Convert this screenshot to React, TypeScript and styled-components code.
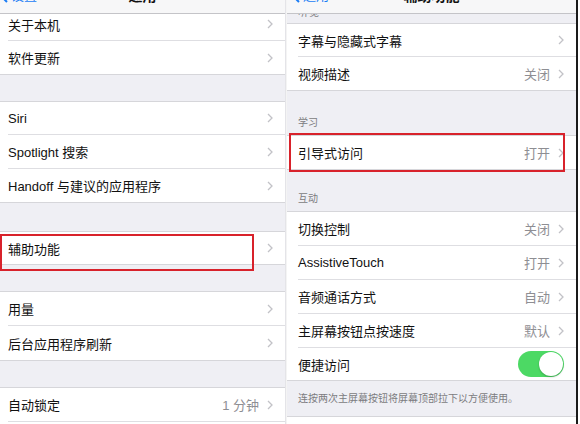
import React from "react";
import styled, { createGlobalStyle } from "styled-components";

const Global = createGlobalStyle`
  html, body { margin: 0; padding: 0; background: #ffffff; }
  body { font-family: "Liberation Sans", "Noto Sans CJK SC", sans-serif; -webkit-font-smoothing: antialiased; }
  #root { width: 580px; height: 424px; overflow: hidden; }
`;

const Page = styled.div`
  display: flex;
  width: 580px;
  height: 424px;
  background: #ffffff;
`;

const Panel = styled.div<{ $w: number; $edge?: boolean }>`
  width: ${(p) => p.$w}px;
  height: 424px;
  flex: none;
  display: flex;
  flex-direction: column;
  background: #efeff4;
  overflow: hidden;
  border-right: ${(p) => (p.$edge ? "2px solid #1a1a1a" : "1px solid #e4e4e8")};
  box-sizing: content-box;
`;

const Spacer = styled.div`
  width: 1px;
  flex: none;
  background: #f4f4f4;
`;

const NavBar = styled.div`
  position: relative;
  height: 14px;
  flex: none;
  background: #f7f7f8;
  border-bottom: 1px solid #c4c4c8;
  box-sizing: border-box;
  overflow: hidden;
  display: flex;
  align-items: flex-end;
  justify-content: center;
`;

const NavTitle = styled.div`
  font-size: 14px;
  font-weight: 700;
  color: #111;
  line-height: 18px;
  margin-bottom: 8px;
`;

const Back = styled.div<{ $left: number }>`
  position: absolute;
  left: ${(p) => p.$left}px;
  bottom: 8px;
  display: flex;
  align-items: center;
  gap: 3px;
  color: #1a7cf5;
  font-size: 13px;
  line-height: 18px;
`;

const Gap = styled.div<{ $h: number }>`
  height: ${(p) => p.$h}px;
  flex: none;
  box-sizing: border-box;
  border-bottom: 1px solid #d6d6da;
  display: flex;
  align-items: flex-end;
  padding: 0 11px 6px;
  font-size: 10px;
  color: #7c7c80;
  overflow: hidden;
`;

const CutHeader = styled(Gap)`
  padding-bottom: 0;
  align-items: flex-start;
  & > span {
    margin-top: -10px;
    letter-spacing: 1px;
  }
`;

const Footer = styled.div`
  height: 36px;
  flex: none;
  padding: 9px 11px 0;
  box-sizing: border-box;
  font-size: 10px;
  color: #7c7c80;
  border-bottom: 1px solid #d6d6da;
`;

const Group = styled.div<{ $inset: number }>`
  background: #ffffff;
  border-bottom: 1px solid #d6d6da;
  padding-left: ${(p) => p.$inset}px;
  flex: none;
`;

const Row = styled.div<{ $h?: number; $shift?: number }>`
  position: relative;
  height: ${(p) => p.$h ?? 33}px;
  box-sizing: border-box;
  display: flex;
  align-items: center;
  padding-right: 12px;
  padding-bottom: ${(p) => p.$shift ?? 0}px;
  border-bottom: 1px solid #dedee2;
  &:last-child { border-bottom: none; }
`;

const Label = styled.span`
  flex: 1;
  font-size: 13px;
  color: #111;
  white-space: nowrap;
`;

const Value = styled.span`
  font-size: 13px;
  color: #8e8e93;
  margin-right: 8px;
`;

const Mark = styled.div<{ $l: number; $t: number; $w: number; $h: number }>`
  position: absolute;
  left: ${(p) => p.$l}px;
  top: ${(p) => p.$t}px;
  width: ${(p) => p.$w}px;
  height: ${(p) => p.$h}px;
  border: 2px solid #d8222b;
  box-sizing: border-box;
  pointer-events: none;
`;

const Toggle = styled.div`
  width: 46px;
  height: 26px;
  border-radius: 13px;
  background: #4cd964;
  position: relative;
  flex: none;
  &::after {
    content: "";
    position: absolute;
    right: 1px;
    top: 1px;
    width: 24px;
    height: 24px;
    border-radius: 50%;
    background: #fff;
    box-shadow: 0 1px 2px rgba(0,0,0,0.25);
  }
`;

const Chevron = () => (
  <svg width="6" height="10" viewBox="0 0 6 10">
    <path d="M1 1 L5 5 L1 9" fill="none" stroke="#c2c2c7" strokeWidth="1.3" />
  </svg>
);

const BackChevron = () => (
  <svg width="8" height="14" viewBox="0 0 8 14">
    <path d="M7 1 L1 7 L7 13" fill="none" stroke="#1a7cf5" strokeWidth="2" />
  </svg>
);

type Item = { label: string; value?: string; toggle?: boolean };

const Cell = ({ item, h, shift, children }: { item: Item; h?: number; shift?: number; children?: React.ReactNode }) => (
  <Row $h={h} $shift={shift}>
    <Label>{item.label}</Label>
    {item.toggle ? (
      <Toggle />
    ) : (
      <>
        {item.value && <Value>{item.value}</Value>}
        {item.label && <Chevron />}
      </>
    )}
    {children}
  </Row>
);

export default function App() {
  return (
    <>
      <Global />
      <Page>
        <Panel $w={285}>
          <NavBar>
            <Back $left={0}>
              <BackChevron />
              设置
            </Back>
            <NavTitle>通用</NavTitle>
          </NavBar>
          <Group $inset={8}>
            <Cell item={{ label: "关于本机" }} h={27} shift={6} />
            <Cell item={{ label: "软件更新" }} h={33} />
          </Group>
          <Gap $h={27} />
          <Group $inset={8}>
            <Cell item={{ label: "Siri" }} h={33} />
            <Cell item={{ label: "Spotlight 搜索" }} h={34} />
            <Cell item={{ label: "Handoff 与建议的应用程序" }} h={33} />
          </Group>
          <Gap $h={29} />
          <Group $inset={8}>
            <Cell item={{ label: "辅助功能" }} h={32}>
              <Mark $l={-8} $t={2} $w={254} $h={37} />
            </Cell>
          </Group>
          <Gap $h={27} />
          <Group $inset={8}>
            <Cell item={{ label: "用量" }} h={34} />
            <Cell item={{ label: "后台应用程序刷新" }} h={34} />
          </Group>
          <Gap $h={27} />
          <Group $inset={8}>
            <Cell item={{ label: "自动锁定", value: "1 分钟" }} h={34} />
            <Cell item={{ label: "" }} h={34} />
          </Group>
        </Panel>
        <Spacer />
        <Panel $w={289} $edge>
          <NavBar>
            <Back $left={5}>
              <BackChevron />
              通用
            </Back>
            <NavTitle>辅助功能</NavTitle>
          </NavBar>
          <CutHeader $h={10}>
            <span>听觉</span>
          </CutHeader>
          <Group $inset={11}>
            <Cell item={{ label: "字幕与隐藏式字幕" }} h={33} />
            <Cell item={{ label: "视频描述", value: "关闭" }} h={33} />
          </Group>
          <Gap $h={45}>学习</Gap>
          <Group $inset={11}>
            <Cell item={{ label: "引导式访问", value: "打开" }} h={33}>
              <Mark $l={-9} $t={-3} $w={276} $h={39} />
            </Cell>
          </Group>
          <Gap $h={42}>互动</Gap>
          <Group $inset={11}>
            <Cell item={{ label: "切换控制", value: "关闭" }} h={34} />
            <Cell item={{ label: "AssistiveTouch", value: "打开" }} h={34} />
            <Cell item={{ label: "音频通话方式", value: "自动" }} h={34} />
            <Cell item={{ label: "主屏幕按钮点按速度", value: "默认" }} h={34} />
            <Cell item={{ label: "便捷访问", toggle: true }} h={32} />
          </Group>
          <Footer>连按两次主屏幕按钮将屏幕顶部拉下以方便使用。</Footer>
          <Group $inset={11} style={{ borderBottom: "none" }}>
            <Row $h={30} />
          </Group>
        </Panel>
      </Page>
    </>
  );
}
